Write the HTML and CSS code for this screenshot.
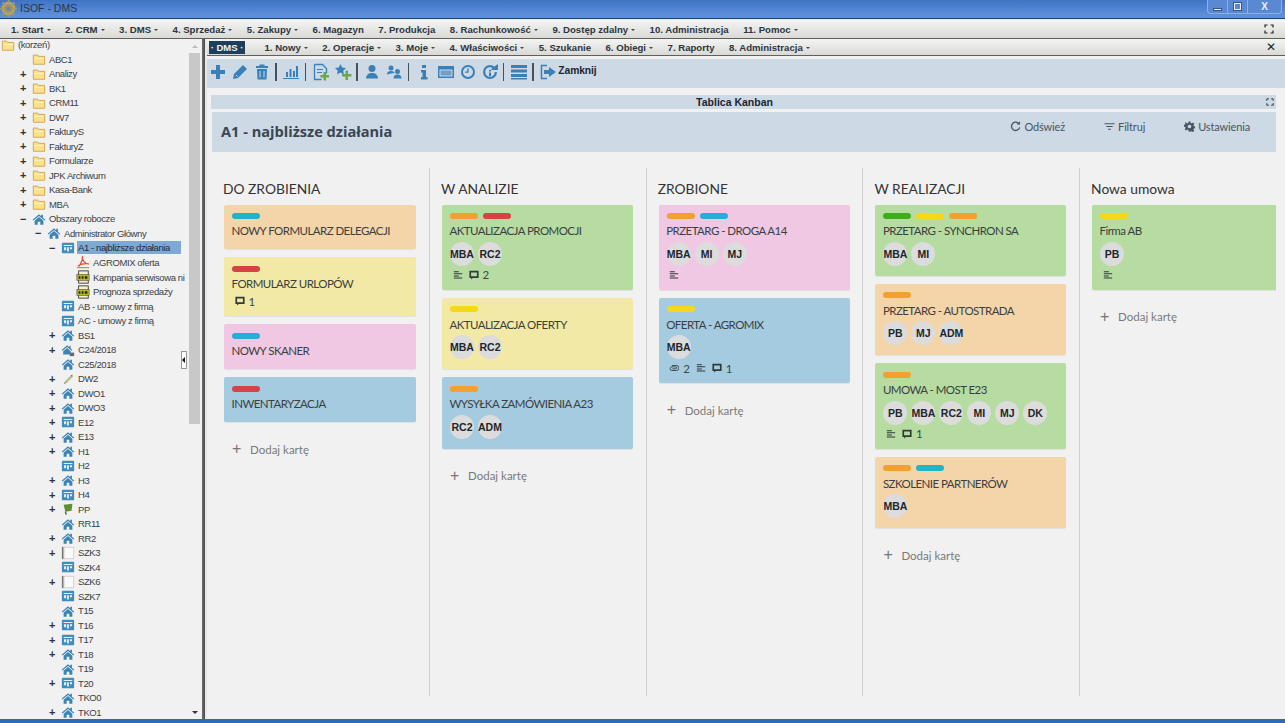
FILE: index.html
```html
<!DOCTYPE html>
<html lang="pl">
<head>
<meta charset="utf-8">
<title>ISOF - DMS</title>
<link rel="stylesheet" href="styles.css">
</head>
<body>
<svg class="defs" aria-hidden="true">
  <symbol id="folder" viewBox="0 0 16 16"><path d="M1.500 3.500h5l1 1.500h7v9h-13z" fill="#fde08a" stroke="#c9a14c"/><path d="M2.500 7h11v1h-11z" fill="#fff2c0"/></symbol>
  <symbol id="home" viewBox="0 0 16 16"><path d="M8 2.500.8 8.800l1 .9L8 4.600l6.200 5.100 1-.9-2.700-2.300V3h-2v1.900z" fill="#3b84b6"/><path d="M3 10 8 5.800l5 4.200v4.500H9.500V11h-3v3.500H3z" fill="#3b84b6"/></symbol>
  <symbol id="board" viewBox="0 0 16 16"><rect x="1" y="2" width="14" height="12" rx="1" fill="#3f8cbd"/><path d="M3 4.500h10v1.200H3zM3.500 7h2.400v3.500H3.500zM7 7h2v5H7zM10.200 7h2.400v2.500h-2.400z" fill="#e6f1f7"/></symbol>
  <symbol id="pdf" viewBox="0 0 16 16"><path d="M7 1.500c1.500 0 .5 5-3.500 11.500M7 2c0 4 3 8 8 8.500M2 12.500c3-1.500 7-3 11-2.500" fill="none" stroke="#d8503c" stroke-width="1.400"/><path d="M1 14h14v1H1z" fill="#d8503c"/></symbol>
  <symbol id="bsf" viewBox="0 0 16 16"><rect x="3" y="1" width="11" height="14" fill="#f3efd0" stroke="#333"/><rect x="1" y="5" width="14" height="7" fill="#b7b52c" stroke="#444" stroke-width=".6"/><path d="M3 7h2v3H3zM6.500 7h2v3h-2zM10 7h3v3h-3z" fill="#26260a"/></symbol>
  <symbol id="pen" viewBox="0 0 16 16"><path d="M3 14l2-4 6-6 2 2-6 6z" fill="#b9c28a"/><path d="M11 4l2-1 0 3z" fill="#b33"/><path d="M3 14l2-3 1 1z" fill="#5d8a3a"/></symbol>
  <symbol id="flag" viewBox="0 0 16 16"><path d="M3 3l10-1-1 8-7 1z" fill="#5f8f33"/><path d="M5 11l1 3.500" stroke="#3a5a20" stroke-width="1.500"/></symbol>
  <symbol id="szk" viewBox="0 0 16 16"><rect x="1" y="1" width="2" height="14" fill="#777"/><rect x="3.500" y="1.500" width="11" height="13" fill="#fafafa" stroke="#cfcfcf"/></symbol>
  <symbol id="lock" viewBox="0 0 16 16"><path d="M7 2.500.8 8l1 .9L7 4.600l5 4.300 1-.9-2-1.800V3H9.500v1.900z" fill="#3b84b6"/><path d="M2.500 9.500 7 5.800l4 3.500V13H2.500z" fill="#3b84b6"/><rect x="10" y="11" width="5" height="4" fill="#667"/></symbol>
  <symbol id="t-plus" viewBox="0 0 18 18"><path d="M7 2h4v5h5v4h-5v5H7v-5H2V7h5z"/></symbol>
  <symbol id="t-pencil" viewBox="0 0 18 18"><path d="M12 2l4 4-9 9-5 1 1-5z"/><path d="M5 12l1.500 1.500" stroke="#cdd9e4"/></symbol>
  <symbol id="t-trash" viewBox="0 0 18 18"><path d="M6.500 1.500h5V3h3.500v2H3V3h3.500zM4 6h10l-.5 10.500h-9zM6.500 8v6.500h1V8zM10.500 8v6.500h1V8z" fill-rule="evenodd"/></symbol>
  <symbol id="t-chart" viewBox="0 0 18 18"><path d="M1 15h16v1H1zM4 9h2v5H4zM7.500 6h2v8h-2zM11 8h2v6h-2zM14 3h2v11h-2z"/></symbol>
  <symbol id="t-doc" viewBox="0 0 18 18"><path d="M2.500 1.500h8l4 4v5M2.500 1.500v15h7" fill="none" stroke="#3a80b8" stroke-width="1.300"/><path d="M5 6h6v1H5zM5 9h5v1H5z"/><path d="M11.500 9h2.500v3h3v2.500h-3v3h-2.500v-3h-3V12h3z" fill="#6aa84a"/></symbol>
  <symbol id="t-star" viewBox="0 0 18 18"><path d="M6.500 1l1.700 3.600 3.800.5-2.800 2.600.7 3.800-3.400-1.900-3.400 1.900.7-3.800L1 5.100l3.800-.5z"/><path d="M11.500 7.500H14V11h3.500v2.500H14V17h-2.500v-3.500H8V11h3.500z" fill="#6aa84a"/></symbol>
  <symbol id="t-user" viewBox="0 0 18 18"><circle cx="9" cy="5.500" r="3.500"/><path d="M3 15.500c0-3.500 2.500-5.500 6-5.500s6 2 6 5.500z"/></symbol>
  <symbol id="t-users" viewBox="0 0 18 18"><circle cx="6" cy="5" r="2.500"/><path d="M2 11.500c0-2.500 1.500-3.500 4-3.500s3.500 1 3.500 2.200H7z"/><circle cx="12.500" cy="8.500" r="2.500"/><path d="M8.500 15.500c0-2.800 1.500-4 4-4s4 1.200 4 4z"/></symbol>
  <symbol id="t-info" viewBox="0 0 18 18"><path d="M7 2h4v3H7zM6 7h5v7h1.500v2.500h-6.500V14h1.500V9.500H6z"/></symbol>
  <symbol id="t-win" viewBox="0 0 18 18"><path d="M1 3h16v12H1zM2.500 6.500v7h13v-7z" fill-rule="evenodd"/><path d="M3.500 7.500h11v5h-11z" opacity=".65"/></symbol>
  <symbol id="t-clock" viewBox="0 0 18 18"><path d="M9 2a7 7 0 1 0 0 14A7 7 0 0 0 9 2zm0 2a5 5 0 1 1 0 10A5 5 0 0 1 9 4z" fill-rule="evenodd"/><path d="M8.300 5.500h1.400v4.300H6v-1.300h2.300z"/></symbol>
  <symbol id="t-refresh" viewBox="0 0 18 18"><path d="M9 2a7 7 0 1 0 7 7h-2.200A4.800 4.800 0 1 1 9 4.200c1 0 1.900.3 2.600.8L9.500 7H17V1l-3.500 2.500A7 7 0 0 0 9 2z"/><path d="M8 7h2v1.500H8zM8 9.500h2V13H8z"/></symbol>
  <symbol id="t-lines" viewBox="0 0 18 18"><path d="M1 2h16v3H1zM1 6.500h16v3H1zM1 11h16v3H1zM1 15h16v1.500H1z"/></symbol>
  <symbol id="t-exit" viewBox="0 0 18 18"><path d="M8 2.500H2.500v13H8" fill="none" stroke="#3a80b8" stroke-width="1.500"/><path d="M10 4l7 5-7 5v-3H5V7h5z"/></symbol>
  <symbol id="b-desc" viewBox="0 0 12 12"><path d="M1 1.500h6v1.200H1zM1 4h10v1.200H1zM1 6.500h6v1.200H1zM1 9h10v1.200H1z"/></symbol>
  <symbol id="b-comm" viewBox="0 0 12 12"><path d="M.5 1h11v8.500H4.500L2.500 11.500v-2H.5zM2.500 3v4.500h7V3z" fill-rule="evenodd"/></symbol>
  <symbol id="b-clip" viewBox="0 0 12 12"><path d="M3.500 3h5.500a3 3 0 0 1 0 6H3.500a2.200 2.200 0 0 1 0-4.400H8a1.200 1.200 0 0 1 0 2.400H4" fill="none" stroke="currentColor" stroke-width="1"/></symbol>
  <symbol id="a-refresh" viewBox="0 0 12 12"><path d="M10 3.500A4.500 4.500 0 1 0 10.500 7" fill="none" stroke="currentColor" stroke-width="1.400"/><path d="M7.500 3.700H11V.4z"/></symbol>
  <symbol id="a-filter" viewBox="0 0 12 12"><path d="M.5 2.500h11v1H.5zM2.500 5.500h7v1h-7zM4.500 8.500h3v1h-3z"/></symbol>
  <symbol id="a-gear" viewBox="0 0 12 12"><path d="M5 .5h2l.3 1.600 1.100.5L9.800 1.700l1.400 1.400-.9 1.400.5 1.100 1.600.3v2l-1.600.3-.5 1.100.9 1.400-1.400 1.400-1.400-.9-1.100.5L7 11.500H5l-.3-1.600-1.100-.5-1.400.9L.8 8.900l.9-1.400-.5-1.100L-.4 6.100v-2l1.600-.3.5-1.100-.9-1.400L2.200 1.700l1.400.9 1.100-.5zM6 4a2 2 0 1 0 0 4 2 2 0 0 0 0-4z" fill-rule="evenodd"/></symbol>
  <symbol id="expand" viewBox="0 0 10 10"><path d="M1 3.500V1h2.500M6.500 1H9v2.500M9 6.500V9H6.500M3.500 9H1V6.500" fill="none" stroke="currentColor" stroke-width="1.200"/></symbol>
  <symbol id="logo" viewBox="0 0 16 16"><circle cx="8" cy="8" r="5" fill="none" stroke="#b5a35f" stroke-width="3"/><path d="M8 0v16M0 8h16M2.300 2.300l11.400 11.400M13.700 2.300 2.300 13.700" stroke="#a8986a" stroke-width="1.600"/><circle cx="8" cy="8" r="2" fill="#6d83a8"/></symbol>
</svg>

<div class="app">
  <header class="titlebar">
    <svg class="logo"><use href="#logo"/></svg>
    <span class="apptitle">ISOF - DMS</span>
    <div class="winbtns">
      <span class="winbtn"><i class="w-min"></i></span>
      <span class="winbtn"><i class="w-rest"></i></span>
      <span class="winbtn wclose">X</span>
    </div>
  </header>

  <nav class="menubar top">
    <span class="mi dd">1. Start</span>
    <span class="mi dd">2. CRM</span>
    <span class="mi dd">3. DMS</span>
    <span class="mi dd">4. Sprzedaż</span>
    <span class="mi dd">5. Zakupy</span>
    <span class="mi">6. Magazyn</span>
    <span class="mi">7. Produkcja</span>
    <span class="mi dd">8. Rachunkowość</span>
    <span class="mi dd">9. Dostęp zdalny</span>
    <span class="mi">10. Administracja</span>
    <span class="mi dd">11. Pomoc</span>
    <svg class="menu-end"><use href="#expand"/></svg>
  </nav>

  <div class="workspace">
    <aside class="sidebar">
      <ul class="tree">
        <li class="row lv0"><svg class="ti"><use href="#folder"/></svg><span>(korzeń)</span></li>
        <li class="row lv1"><b class="tg"></b><svg class="ti"><use href="#folder"/></svg><span>ABC1</span></li>
        <li class="row lv1"><b class="tg">+</b><svg class="ti"><use href="#folder"/></svg><span>Analizy</span></li>
        <li class="row lv1"><b class="tg">+</b><svg class="ti"><use href="#folder"/></svg><span>BK1</span></li>
        <li class="row lv1"><b class="tg">+</b><svg class="ti"><use href="#folder"/></svg><span>CRM11</span></li>
        <li class="row lv1"><b class="tg">+</b><svg class="ti"><use href="#folder"/></svg><span>DW7</span></li>
        <li class="row lv1"><b class="tg">+</b><svg class="ti"><use href="#folder"/></svg><span>FakturyS</span></li>
        <li class="row lv1"><b class="tg">+</b><svg class="ti"><use href="#folder"/></svg><span>FakturyZ</span></li>
        <li class="row lv1"><b class="tg">+</b><svg class="ti"><use href="#folder"/></svg><span>Formularze</span></li>
        <li class="row lv1"><b class="tg">+</b><svg class="ti"><use href="#folder"/></svg><span>JPK Archiwum</span></li>
        <li class="row lv1"><b class="tg">+</b><svg class="ti"><use href="#folder"/></svg><span>Kasa-Bank</span></li>
        <li class="row lv1"><b class="tg">+</b><svg class="ti"><use href="#folder"/></svg><span>MBA</span></li>
        <li class="row lv1"><b class="tg">−</b><svg class="ti"><use href="#home"/></svg><span>Obszary robocze</span></li>
        <li class="row lv2"><b class="tg">−</b><svg class="ti"><use href="#home"/></svg><span>Administrator Główny</span></li>
        <li class="row lv3"><b class="tg">−</b><svg class="ti"><use href="#board"/></svg><span class="sel">A1 - najbliższe działania</span></li>
        <li class="row lv4"><svg class="ti"><use href="#pdf"/></svg><span>AGROMIX oferta</span></li>
        <li class="row lv4"><svg class="ti"><use href="#bsf"/></svg><span>Kampania serwisowa ni</span></li>
        <li class="row lv4"><svg class="ti"><use href="#bsf"/></svg><span>Prognoza sprzedaży</span></li>
        <li class="row lv3"><b class="tg"></b><svg class="ti"><use href="#board"/></svg><span>AB - umowy z firmą</span></li>
        <li class="row lv3"><b class="tg"></b><svg class="ti"><use href="#board"/></svg><span>AC - umowy z firmą</span></li>
        <li class="row lv3"><b class="tg">+</b><svg class="ti"><use href="#home"/></svg><span>BS1</span></li>
        <li class="row lv3"><b class="tg">+</b><svg class="ti"><use href="#lock"/></svg><span>C24/2018</span></li>
        <li class="row lv3"><b class="tg"></b><svg class="ti"><use href="#home"/></svg><span>C25/2018</span></li>
        <li class="row lv3"><b class="tg">+</b><svg class="ti"><use href="#pen"/></svg><span>DW2</span></li>
        <li class="row lv3"><b class="tg">+</b><svg class="ti"><use href="#home"/></svg><span>DWO1</span></li>
        <li class="row lv3"><b class="tg">+</b><svg class="ti"><use href="#home"/></svg><span>DWO3</span></li>
        <li class="row lv3"><b class="tg">+</b><svg class="ti"><use href="#board"/></svg><span>E12</span></li>
        <li class="row lv3"><b class="tg">+</b><svg class="ti"><use href="#home"/></svg><span>E13</span></li>
        <li class="row lv3"><b class="tg">+</b><svg class="ti"><use href="#home"/></svg><span>H1</span></li>
        <li class="row lv3"><b class="tg"></b><svg class="ti"><use href="#board"/></svg><span>H2</span></li>
        <li class="row lv3"><b class="tg">+</b><svg class="ti"><use href="#home"/></svg><span>H3</span></li>
        <li class="row lv3"><b class="tg">+</b><svg class="ti"><use href="#board"/></svg><span>H4</span></li>
        <li class="row lv3"><b class="tg">+</b><svg class="ti"><use href="#flag"/></svg><span>PP</span></li>
        <li class="row lv3"><b class="tg"></b><svg class="ti"><use href="#home"/></svg><span>RR11</span></li>
        <li class="row lv3"><b class="tg">+</b><svg class="ti"><use href="#home"/></svg><span>RR2</span></li>
        <li class="row lv3"><b class="tg">+</b><svg class="ti"><use href="#szk"/></svg><span>SZK3</span></li>
        <li class="row lv3"><b class="tg"></b><svg class="ti"><use href="#board"/></svg><span>SZK4</span></li>
        <li class="row lv3"><b class="tg">+</b><svg class="ti"><use href="#szk"/></svg><span>SZK6</span></li>
        <li class="row lv3"><b class="tg"></b><svg class="ti"><use href="#board"/></svg><span>SZK7</span></li>
        <li class="row lv3"><b class="tg"></b><svg class="ti"><use href="#home"/></svg><span>T15</span></li>
        <li class="row lv3"><b class="tg">+</b><svg class="ti"><use href="#board"/></svg><span>T16</span></li>
        <li class="row lv3"><b class="tg">+</b><svg class="ti"><use href="#board"/></svg><span>T17</span></li>
        <li class="row lv3"><b class="tg">+</b><svg class="ti"><use href="#home"/></svg><span>T18</span></li>
        <li class="row lv3"><b class="tg"></b><svg class="ti"><use href="#home"/></svg><span>T19</span></li>
        <li class="row lv3"><b class="tg">+</b><svg class="ti"><use href="#board"/></svg><span>T20</span></li>
        <li class="row lv3"><b class="tg"></b><svg class="ti"><use href="#home"/></svg><span>TKO0</span></li>
        <li class="row lv3"><b class="tg">+</b><svg class="ti"><use href="#home"/></svg><span>TKO1</span></li>
      </ul>
      <div class="vscroll">
        <span class="arrow up"></span>
        <span class="thumb"></span>
        <span class="arrow down"></span>
      </div>
      <span class="collapse"></span>
    </aside>
    <div class="splitter"></div>

    <main class="main">
      <nav class="menubar sub">
        <span class="pill">· DMS ·</span>
        <span class="mi dd">1. Nowy</span>
        <span class="mi dd">2. Operacje</span>
        <span class="mi dd">3. Moje</span>
        <span class="mi dd">4. Właściwości</span>
        <span class="mi">5. Szukanie</span>
        <span class="mi dd">6. Obiegi</span>
        <span class="mi">7. Raporty</span>
        <span class="mi dd">8. Administracja</span>
        <span class="closex">✕</span>
      </nav>

      <div class="toolbar">
        <svg class="tb"><use href="#t-plus"/></svg>
        <svg class="tb"><use href="#t-pencil"/></svg>
        <svg class="tb"><use href="#t-trash"/></svg>
        <i class="sep"></i>
        <svg class="tb"><use href="#t-chart"/></svg>
        <i class="sep"></i>
        <svg class="tb"><use href="#t-doc"/></svg>
        <svg class="tb"><use href="#t-star"/></svg>
        <i class="sep"></i>
        <svg class="tb"><use href="#t-user"/></svg>
        <svg class="tb"><use href="#t-users"/></svg>
        <i class="sep"></i>
        <svg class="tb"><use href="#t-info"/></svg>
        <svg class="tb"><use href="#t-win"/></svg>
        <svg class="tb"><use href="#t-clock"/></svg>
        <svg class="tb"><use href="#t-refresh"/></svg>
        <i class="sep"></i>
        <svg class="tb"><use href="#t-lines"/></svg>
        <i class="sep"></i>
        <svg class="tb"><use href="#t-exit"/></svg>
        <span class="tbtext">Zamknij</span>
      </div>

      <section class="panel">
        <div class="paneltitle">
          <span>Tablica Kanban</span>
          <svg class="pexpand"><use href="#expand"/></svg>
        </div>
        <div class="boardhead">
          <h1>A1 - najbliższe działania</h1>
          <div class="actions">
            <span class="act"><svg><use href="#a-refresh"/></svg>Odśwież</span>
            <span class="act"><svg><use href="#a-filter"/></svg>Filtruj</span>
            <span class="act"><svg><use href="#a-gear"/></svg>Ustawienia</span>
          </div>
        </div>

        <div class="board">
          <div class="col">
            <h2>DO ZROBIENIA</h2>
            <div class="cards">
              <article class="card orange"><div class="labels"><i class="l-teal"></i></div><p>NOWY FORMULARZ DELEGACJI</p></article>
              <article class="card yellow"><div class="labels"><i class="l-red"></i></div><p>FORMULARZ URLOPÓW</p><div class="badges"><svg><use href="#b-comm"/></svg><span>1</span></div></article>
              <article class="card pink"><div class="labels"><i class="l-blue"></i></div><p>NOWY SKANER</p></article>
              <article class="card blue"><div class="labels"><i class="l-red"></i></div><p>INWENTARYZACJA</p></article>
            </div>
            <div class="add"><b>+</b>Dodaj kartę</div>
          </div>

          <div class="col">
            <h2>W ANALIZIE</h2>
            <div class="cards">
              <article class="card green"><div class="labels"><i class="l-orange"></i><i class="l-red"></i></div><p>AKTUALIZACJA PROMOCJI</p><div class="avs"><b>MBA</b><b>RC2</b></div><div class="badges"><svg><use href="#b-desc"/></svg><svg><use href="#b-comm"/></svg><span>2</span></div></article>
              <article class="card yellow"><div class="labels"><i class="l-yellow"></i></div><p>AKTUALIZACJA OFERTY</p><div class="avs"><b>MBA</b><b>RC2</b></div></article>
              <article class="card blue"><div class="labels"><i class="l-orange"></i></div><p>WYSYŁKA ZAMÓWIENIA A23</p><div class="avs"><b>RC2</b><b>ADM</b></div></article>
            </div>
            <div class="add"><b>+</b>Dodaj kartę</div>
          </div>

          <div class="col">
            <h2>ZROBIONE</h2>
            <div class="cards">
              <article class="card pink"><div class="labels"><i class="l-orange"></i><i class="l-blue"></i></div><p>PRZETARG - DROGA A14</p><div class="avs"><b>MBA</b><b>MI</b><b>MJ</b></div><div class="badges"><svg><use href="#b-desc"/></svg></div></article>
              <article class="card blue"><div class="labels"><i class="l-yellow"></i></div><p>OFERTA - AGROMIX</p><div class="avs"><b>MBA</b></div><div class="badges"><svg><use href="#b-clip"/></svg><span>2</span><svg><use href="#b-desc"/></svg><svg><use href="#b-comm"/></svg><span>1</span></div></article>
            </div>
            <div class="add"><b>+</b>Dodaj kartę</div>
          </div>

          <div class="col">
            <h2>W REALIZACJI</h2>
            <div class="cards">
              <article class="card green"><div class="labels"><i class="l-green"></i><i class="l-yellow"></i><i class="l-orange"></i></div><p>PRZETARG - SYNCHRON SA</p><div class="avs"><b>MBA</b><b>MI</b></div></article>
              <article class="card orange"><div class="labels"><i class="l-orange"></i></div><p>PRZETARG - AUTOSTRADA</p><div class="avs"><b>PB</b><b>MJ</b><b>ADM</b></div></article>
              <article class="card green"><div class="labels"><i class="l-orange"></i></div><p>UMOWA - MOST E23</p><div class="avs"><b>PB</b><b>MBA</b><b>RC2</b><b>MI</b><b>MJ</b><b>DK</b></div><div class="badges"><svg><use href="#b-desc"/></svg><svg><use href="#b-comm"/></svg><span>1</span></div></article>
              <article class="card orange"><div class="labels"><i class="l-orange"></i><i class="l-teal"></i></div><p>SZKOLENIE PARTNERÓW</p><div class="avs"><b>MBA</b></div></article>
            </div>
            <div class="add"><b>+</b>Dodaj kartę</div>
          </div>

          <div class="col last">
            <h2>Nowa umowa</h2>
            <div class="cards">
              <article class="card green"><div class="labels"><i class="l-yellow"></i></div><p>Firma AB</p><div class="avs"><b>PB</b></div><div class="badges"><svg><use href="#b-desc"/></svg></div></article>
            </div>
            <div class="add"><b>+</b>Dodaj kartę</div>
          </div>
        </div>
      </section>
    </main>
  </div>
  <div class="statusbar"></div>
</div>
</body>
</html>
```

FILE: styles.css
```css
* { box-sizing: border-box; }
html, body { margin: 0; height: 100%; overflow: hidden; }
body { font-family: "Liberation Sans", Arial, sans-serif; background: #f0f0f0; color: #222; }
.defs { position: absolute; width: 0; height: 0; }
.app { width: 1285px; height: 723px; display: flex; flex-direction: column; overflow: hidden; }

/* title bar */
.titlebar { height: 19px; flex: none; display: flex; align-items: flex-start; background: linear-gradient(#3f73c4, #5f90db 90%); border-bottom: 1px solid #22426f; }
.logo { width: 17px; height: 17px; flex: none; }
.apptitle { margin-left: 3px; font-size: 10.500px; line-height: 16px; color: #27364f; }
.winbtns { margin-left: auto; margin-right: 3px; display: flex; height: 14px; border: 1px solid #8db0e4; border-top: 0; border-radius: 0 0 4px 4px; background: #5a88d3; }
.winbtn { width: 20px; height: 13px; display: flex; align-items: center; justify-content: center; border-right: 1px solid #8db0e4; color: #e6eefb; font-size: 10px; font-weight: bold; }
.winbtn.wclose { width: 33px; border-right: 0; }
.w-min { width: 9px; height: 3px; margin-top: 5px; background: #e6eefb; border: 1px solid #33578f; }
.w-rest { width: 9px; height: 9px; border: 2px solid #e8eefb; outline: 1px solid #33578f; outline-offset: -1px; }

/* menu bars */
.menubar { display: flex; align-items: center; flex: none; background: linear-gradient(#f4f4f3, #d9d9d6); border-bottom: 1px solid #5f5f5f; font-size: 9.600px; font-weight: bold; color: #2c3540; }
.menubar.top { height: 20px; border-top: 1px solid #e4eaf4; padding-left: 11px; gap: 14.500px; }
.menubar.sub { height: 17px; padding-left: 2px; gap: 14.500px; }
.mi { white-space: nowrap; }
.mi.dd::after { content: ""; display: inline-block; margin-left: 3px; vertical-align: 2px; border: 2px solid transparent; border-top-color: #444; border-bottom: 0; }
.menu-end { width: 10px; height: 10px; margin-left: auto; margin-right: 11px; color: #222; }
.pill { background: #1d3f5e; color: #f0f4f8; height: 13px; line-height: 13px; width: 36px; text-align: center; margin-right: 5px; white-space: nowrap; font-size: 9.500px; }
.closex { margin-left: auto; margin-right: 9px; font-size: 12px; color: #222; font-weight: normal; font-family: "DejaVu Sans", sans-serif; }

/* workspace */
.workspace { flex: 1; display: flex; min-height: 0; }
.sidebar { width: 202px; flex: none; display: flex; background: #f1f1f1; position: relative; overflow: hidden; }
.tree { list-style: none; margin: -1.500px 0 0; padding: 0; width: 189px; flex: none; overflow: hidden; font-size: 9.500px; letter-spacing: -.4px; color: #3a3f46; }
.row { height: 14.520px; display: flex; align-items: center; white-space: nowrap; }
.lv0 { padding-left: 0; }
.lv1 { padding-left: 18px; }
.lv2 { padding-left: 33px; }
.lv3 { padding-left: 47px; }
.lv4 { padding-left: 75px; }
.tg { width: 13px; flex: none; padding-left: 2px; font-size: 11px; font-weight: bold; color: #333; }
.ti { width: 16px; height: 14px; flex: none; margin-right: 2px; }
.sel { background: #7ea9d4; width: 104px; height: 13px; line-height: 13px; padding-left: 1px; margin-left: -1px; color: #1c2a3a; }

.vscroll { width: 11px; flex: none; display: flex; flex-direction: column; }
.arrow { height: 14px; flex: none; display: flex; align-items: center; justify-content: center; }
.arrow::before { content: ""; border: 3px solid transparent; }
.up::before { border-bottom-color: #bbb; border-top: 0; }
.down { margin-top: auto; }
.down::before { border-top-color: #333; border-bottom: 0; }
.thumb { height: 371px; background: #c8c8c8; }
.collapse { position: absolute; left: 181px; top: 312px; width: 6px; height: 18px; background: #fff; border: 1px solid #999; }
.collapse::before { content: ""; position: absolute; left: 0; top: 5px; border: 3px solid transparent; border-right-color: #111; border-left: 0; }

.splitter { width: 5px; flex: none; background: linear-gradient(90deg, #6f6f6f 0, #4c4c4c 60%, #e8e8e8 60%); }

/* main */
.main { flex: 1; min-width: 0; display: flex; flex-direction: column; background: #f1f1f1; }
.toolbar { height: 29px; margin-top: 3px; flex: none; display: flex; align-items: center; gap: 4px; padding-left: 2px; background: #cdd9e4; }
.tb { width: 18px; height: 18px; fill: #3a80b8; flex: none; margin-top: -4px; }
.sep { width: 1.500px; height: 18px; background: #465058; margin: -4px 1.500px 0 .4px; flex: none; }
.tbtext { font-size: 10.300px; font-weight: bold; color: #1c2530; margin: -7px 0 0 -3px; letter-spacing: -.1px; }

.panel { flex: 1; min-height: 0; display: flex; flex-direction: column; margin: 7px 9px 0 4px; overflow: hidden; }
.paneltitle { height: 14px; flex: none; background: #cdd9e4; display: flex; align-items: center; justify-content: center; position: relative; font-size: 10.500px; font-weight: bold; color: #1c2530; padding-right: 18px; }
.pexpand { position: absolute; right: 2px; top: 3px; width: 8px; height: 8px; color: #333; }
.boardhead { height: 40px; margin: 3px 0 0 1px; flex: none; background: #cdd9e4; display: flex; align-items: center; justify-content: space-between; }
h1 { margin: -2px 0 0 9px; font: bold 14.600px "Open Sans", sans-serif; color: #3a4653; }
.actions { display: flex; gap: 39px; margin: 0 26px 12px 0; font: 11px "Lato", sans-serif; letter-spacing: -.15px; color: #4a5560; }
.act { display: flex; align-items: center; white-space: nowrap; }
.act svg { width: 11px; height: 11px; margin-right: 3px; fill: #4a5560; color: #4a5560; }

/* board */
.board { flex: 1; min-height: 0; display: flex; align-items: flex-start; padding-top: 16px; }
.col { width: 216.700px; height: 528px; flex: none; padding: 0 12.700px 0 12px; border-right: 1px solid #cfcfcf; }
.col:first-child { width: 218px; margin-left: 1px; }
.col.last { border-right: 0; }
h2 { margin: 0 0 0 -1px; height: 36.500px; padding-top: 13px; font: 13.800px/16px "Lato", sans-serif; color: #333; white-space: nowrap; }
.cards { display: flex; flex-direction: column; gap: 8px; }
.card { padding: 8.500px 7.500px 8.400px; border-radius: 2px; box-shadow: 0 1px 1px rgba(0, 0, 0, .07); }
.orange { background: #f3d5a9; }
.yellow { background: #f2e9a6; }
.pink { background: #f0c8e3; }
.blue { background: #a5cbe1; }
.green { background: #b6dca2; }
.labels { display: flex; gap: 5px; height: 6px; margin-left: .5px; }
.labels i { width: 28px; height: 6px; border-radius: 3px; }
.l-teal { background: #1fb4c6; }
.l-red { background: #d64343; }
.l-blue { background: #27aed8; }
.l-yellow { background: #f5d816; }
.l-orange { background: #f2a030; }
.l-green { background: #40ad1d; }
.card p { margin: 4.300px 0 1.800px; font: 11.500px/16px "Lato", sans-serif; letter-spacing: -.55px; color: #3b3f3f; white-space: nowrap; }
.avs { display: flex; gap: 4px; margin: 2.700px 0 1.600px .5px; }
.avs b { width: 24px; height: 24px; flex: none; border-radius: 50%; background: #dcdcdc; display: flex; align-items: center; justify-content: center; font: bold 10.500px "Liberation Sans", sans-serif; color: #20262c; white-space: nowrap; }
.badges { display: flex; align-items: center; height: 14px; font: 11.500px "Lato", sans-serif; color: #3b4a44; padding-left: 3px; }
.badges svg { width: 10px; height: 10px; fill: #303a38; color: #303a38; margin-right: 6px; flex: none; }
.badges span { margin: 0 6px 0 -2px; }
.add { height: 16px; margin-top: 19px; padding-left: 8px; display: flex; align-items: center; font: 11.500px "Lato", sans-serif; color: #7a7a7a; white-space: nowrap; }
.add b { width: 18px; font: 16px/16px "Liberation Sans", sans-serif; color: #777; }

.statusbar { height: 4px; flex: none; background: #2c6cb6; }
```
